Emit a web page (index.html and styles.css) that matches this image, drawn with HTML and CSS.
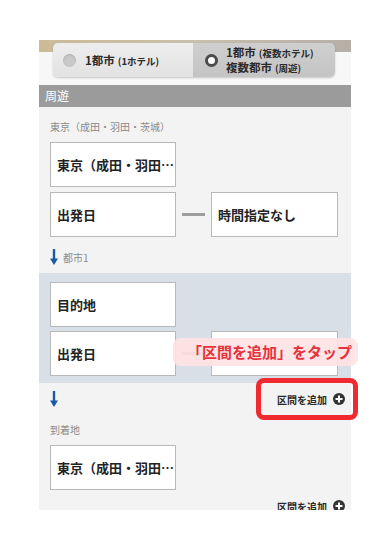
FILE: index.html
```html
<!DOCTYPE html>
<html lang="ja">
<head>
    <meta charset="UTF-8">
    <meta name="viewport" content="width=device-width, initial-scale=1.0">
    <title>周遊 検索</title>
    <link rel="stylesheet" href="styles.css">
</head>
<body>
    <div class="phone">
        <div class="screen">
            <div class="tabbar">
                <div class="tabs">
                    <div class="tab">
                        <span class="radio"></span>
                        <span class="tab-text">1都市<small>(1ホテル)</small></span>
                    </div>
                    <div class="tab active">
                        <span class="radio"></span>
                        <span class="tab-text">1都市<small>(複数ホテル)</small><br>複数都市<small>(周遊)</small></span>
                    </div>
                </div>
            </div>

            <div class="section-title">周遊</div>

            <!-- 出発地 -->
            <div class="leg">
                <div class="leg-label">東京（成田・羽田・茨城）</div>
                <div class="field">東京（成田・羽田…</div>
                <div class="field-row">
                    <div class="field">出発日</div>
                    <span class="dash"></span>
                    <div class="field">時間指定なし</div>
                </div>
                <div class="step">
                    <svg class="arrow" width="8" height="16" viewBox="0 0 8 16"><path d="M4 0v11" stroke="#1b5aa5" stroke-width="2.4"/><path d="M0 9.5h8L4 16z" fill="#1b5aa5"/></svg>
                    <span>都市1</span>
                </div>
            </div>

            <!-- 都市1 -->
            <div class="leg city">
                <div class="field">目的地</div>
                <div class="field-row">
                    <div class="field">出発日</div>
                    <span class="dash"></span>
                    <div class="field"></div>
                </div>
            </div>

            <!-- 到着地 -->
            <div class="leg last">
                <div class="step-row">
                    <svg class="arrow" width="8" height="16" viewBox="0 0 8 16"><path d="M4 0v11" stroke="#1b5aa5" stroke-width="2.4"/><path d="M0 9.5h8L4 16z" fill="#1b5aa5"/></svg>
                    <button class="add-btn">区間を追加 <span class="plus"></span></button>
                </div>
                <div class="leg-label">到着地</div>
                <div class="field">東京（成田・羽田…</div>
                <div class="add-row">
                    <button class="add-btn">区間を追加 <span class="plus"></span></button>
                </div>
            </div>
        </div>

        <div class="callout">「区間を追加」をタップ</div>
        <div class="highlight"></div>
    </div>
</body>
</html>
```

FILE: styles.css
```css
body {
    margin: 0;
    background-color: white;
    font-family: "Noto Sans CJK JP", "Noto Sans", sans-serif;
    color: #222;
}
.phone {
    position: relative;
    width: 312px;
    margin: 40px 0 0 39px;
}
.screen {
    height: 470px;
    overflow: hidden;
    background-color: #f3f3f4;
}
.tabbar {
    padding: 3px 16px 8px 14px;
    background: linear-gradient(to bottom, transparent 12px, #f7f7f7 12px),
                linear-gradient(90deg, #cdbb97, #c9bfad 50%, #b5afa6);
}
.tabs {
    display: flex;
    height: 34px;
    border-radius: 5px;
    overflow: hidden;
    box-shadow: 0 1px 2px rgba(0,0,0,0.2);
}
.tab {
    display: flex;
    align-items: center;
    gap: 9px;
    width: 140px;
    padding-left: 10px;
    box-sizing: border-box;
    background: linear-gradient(#ededed, #e2e2e2);
}
.tab.active {
    width: 142px;
    padding-left: 12px;
    gap: 8px;
    background: linear-gradient(#cfcfcf, #c4c4c4);
}
.radio {
    width: 13px;
    height: 13px;
    border-radius: 50%;
    background-color: #c9c9c9;
    box-shadow: inset 0 1px 2px rgba(0,0,0,0.15);
    flex-shrink: 0;
}
.tab.active .radio {
    width: 7px;
    height: 7px;
    background-color: white;
    border: 3px solid #4a4a4a;
    box-shadow: none;
}
.tab-text {
    font-size: 11.5px;
    font-weight: 700;
    line-height: 14px;
    color: #2a2a2a;
}
.tab-text small {
    font-size: 9.5px;
    margin-left: 3px;
}
.section-title {
    height: 22px;
    line-height: 22px;
    padding-left: 6px;
    background-color: #9b9b9b;
    color: white;
    font-size: 12px;
}
.leg {
    padding: 14px 13px 8px 11px;
}
.leg.city {
    padding: 9px 13px 7px 11px;
    background-color: #d9dfe7;
}
.leg.last {
    padding: 0 0 0 11px;
}
.leg-label {
    font-size: 10px;
    line-height: 12px;
    color: #8a8a8a;
    margin-bottom: 9px;
}
.field {
    width: 126px;
    height: 45px;
    box-sizing: border-box;
    border: 1px solid #b8b8b8;
    background-color: white;
    padding-left: 6px;
    display: flex;
    align-items: center;
    font-size: 13px;
    font-weight: 700;
    white-space: nowrap;
    overflow: hidden;
}
.field-row {
    display: flex;
    align-items: center;
    margin-top: 5px;
}
.leg.city .field-row {
    margin-top: 4px;
}
.field-row .field:last-child {
    width: 127px;
}
.dash {
    width: 23px;
    height: 3px;
    margin: 0 6px;
    background-color: #9d9d9d;
}
.step {
    display: flex;
    align-items: center;
    gap: 5px;
    margin-top: 12px;
    font-size: 10px;
    color: #8a8a8a;
}
.arrow {
    display: block;
    flex-shrink: 0;
}
.step-row {
    display: flex;
    align-items: center;
    justify-content: space-between;
    height: 32px;
    margin-bottom: 9px;
    padding-right: 6px;
}
.add-btn {
    display: flex;
    align-items: center;
    gap: 6px;
    padding: 0;
    border: none;
    background: none;
    font-family: inherit;
    font-size: 10px;
    font-weight: 700;
    color: #2a2a2a;
}
.plus {
    position: relative;
    width: 12px;
    height: 12px;
    border-radius: 50%;
    background-color: #333;
}
.plus::before,
.plus::after {
    content: "";
    position: absolute;
    left: 50%;
    top: 50%;
    background-color: white;
    transform: translate(-50%, -50%);
}
.plus::before {
    width: 7px;
    height: 2px;
}
.plus::after {
    width: 2px;
    height: 7px;
}
.add-row {
    display: flex;
    justify-content: flex-end;
    align-items: center;
    height: 32px;
    padding-right: 6px;
}
.callout {
    position: absolute;
    left: 134px;
    top: 298px;
    width: 185px;
    height: 28px;
    box-sizing: border-box;
    padding-left: 14px;
    border-radius: 8px;
    background-color: rgba(255, 226, 226, 0.9);
    color: #e5323d;
    font-size: 15px;
    font-weight: 700;
    line-height: 28px;
    white-space: nowrap;
}
.highlight {
    position: absolute;
    left: 217px;
    top: 338px;
    width: 102px;
    height: 42px;
    box-sizing: border-box;
    border: 5px solid #ef2a30;
    border-radius: 8px;
}
```
